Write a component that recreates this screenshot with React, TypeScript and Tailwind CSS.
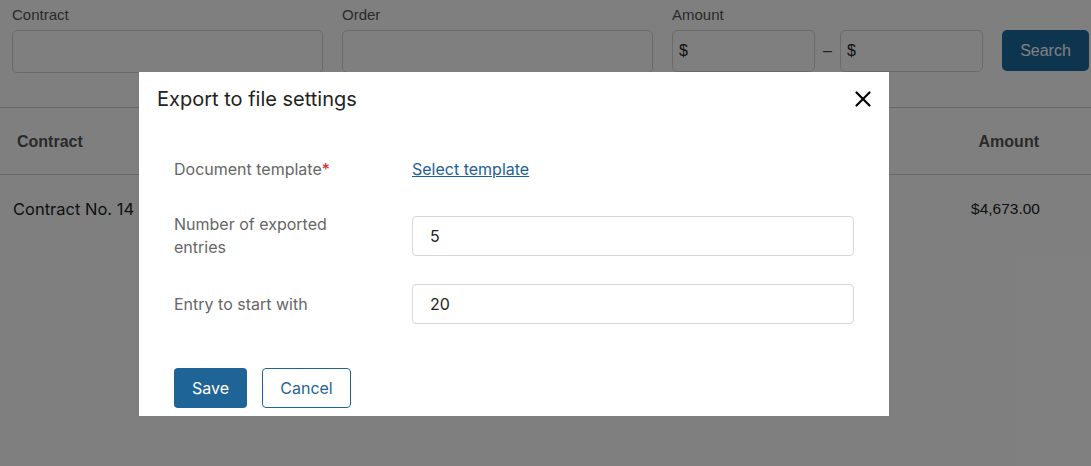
import { X } from 'lucide-react';

// Background filter bar + table, dimmed by a modal overlay
function FilterBar() {
  return (
    <div className="flex items-start gap-[19px] pl-3 pr-[2px] pt-[5px] pb-[34px] border-b border-[#d0d0d0]">
      <div className="flex flex-col gap-[6px] w-[311px] shrink-0">
        <span className="text-[15px] leading-[19px] text-[#555]">Contract</span>
        <div className="h-[43px] rounded-[5px] border border-[#d6d6d6] bg-white" />
      </div>
      <div className="flex flex-col gap-[6px] w-[311px] shrink-0">
        <span className="text-[15px] leading-[19px] text-[#555]">Order</span>
        <div className="h-[43px] rounded-[5px] border border-[#d6d6d6] bg-white" />
      </div>
      <div className="flex flex-col gap-[6px] shrink-0">
        <span className="text-[15px] leading-[19px] text-[#555]">Amount</span>
        <div className="flex items-center">
          <div className="h-[42px] w-[143px] rounded-[5px] border border-[#d6d6d6] bg-white flex items-center pl-[6px] text-[16px] text-[#222]">$</div>
          <span className="w-[25px] text-center text-[#444]">–</span>
          <div className="h-[42px] w-[143px] rounded-[5px] border border-[#d6d6d6] bg-white flex items-center pl-[6px] text-[16px] text-[#222]">$</div>
        </div>
      </div>
      <button className="shrink-0 mt-[25px] h-[41px] w-[87px] rounded-[5px] bg-[#1d6a9f] text-[16px] text-[#fff]">Search</button>
    </div>
  );
}

function Table() {
  return (
    <div>
      <div className="flex items-center justify-between h-[67px] pt-[2px] border-b border-[#d0d0d0] px-[17px] pr-[52px]">
        <span className="font-bold text-[16px] text-[#555]">Contract</span>
        <span className="font-bold text-[16px] text-[#555]">Amount</span>
      </div>
      <div className="flex items-center justify-between h-[68px] pl-[13px] pr-[51px]">
        <span className="text-[16.5px] text-[#222] font-['Inter']">Contract No. 14</span>
        <span className="text-[15.5px] text-[#222]">$4,673.00</span>
      </div>
    </div>
  );
}

function ExportDialog() {
  return (
    <div className="absolute left-[139px] top-[72px] w-[750px] h-[344px] bg-white font-['Inter',sans-serif]">
      <div className="flex items-center justify-between pl-[18px] pr-[13px] pt-[14px]">
        <h2 className="text-[20px] leading-[26px] text-[#222]">Export to file settings</h2>
        <X className="w-[26px] h-[26px] text-black" strokeWidth={2} />
      </div>
      <div className="pl-[35px] pr-[35px] pt-[43px] flex flex-col">
        <div className="flex items-center h-[28px]">
          <span className="w-[238px] text-[16px] text-[#666]">Document template<span className="text-[#e02020]">*</span></span>
          <a className="text-[16px] text-[#1d6196] underline">Select template</a>
        </div>
        <div className="flex items-center mt-[33px] h-[40px]">
          <span className="w-[238px] text-[16px] leading-[23px] text-[#666]">Number of exported<br />entries</span>
          <div className="flex-1 h-[40px] rounded-[4px] border border-[#d6d6d6] flex items-center pl-[17px] text-[16px] text-[#222]">5</div>
        </div>
        <div className="flex items-center mt-[28px] h-[40px]">
          <span className="w-[238px] text-[16px] text-[#666]">Entry to start with</span>
          <div className="flex-1 h-[40px] rounded-[4px] border border-[#d6d6d6] flex items-center pl-[17px] text-[16px] text-[#222]">20</div>
        </div>
        <div className="flex gap-[15px] mt-[44px]">
          <button className="h-[40px] w-[73px] rounded-[4px] bg-[#1f6496] text-white text-[16px]">Save</button>
          <button className="h-[40px] w-[89px] rounded-[4px] border border-[#1f6496] text-[#1f6496] text-[16px]">Cancel</button>
        </div>
      </div>
    </div>
  );
}

export default function App() {
  return (
    <div className="relative w-[1091px] h-[466px] overflow-hidden bg-white font-['Liberation_Sans',Arial,sans-serif]">
      <FilterBar />
      <Table />
      <div className="absolute inset-0 bg-black/50" />
      <ExportDialog />
    </div>
  );
}
